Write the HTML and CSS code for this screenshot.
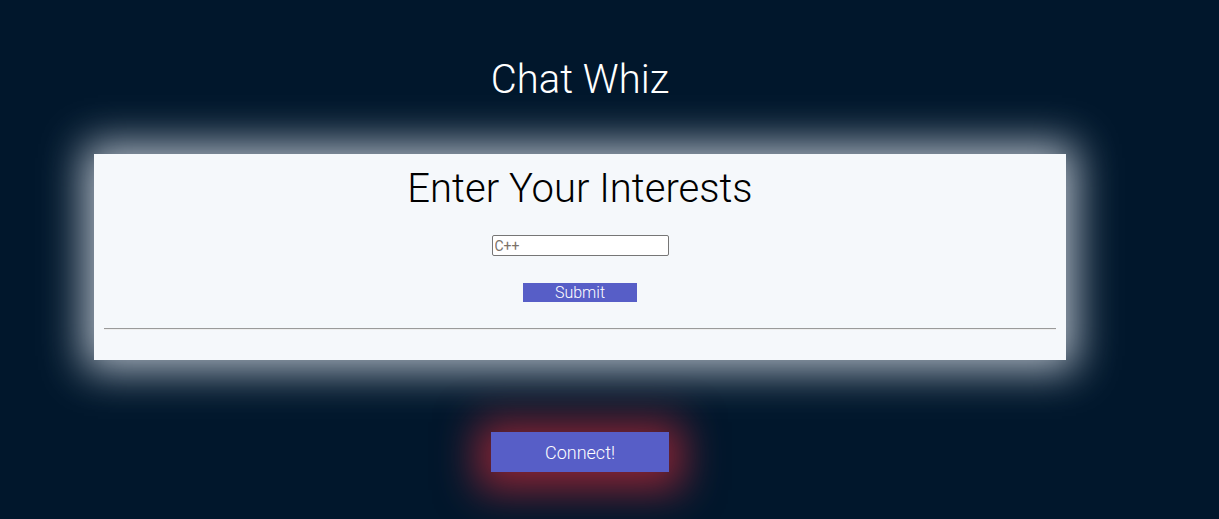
FILE: index.html
```html
<!DOCTYPE html>
<html lang="en">
<head>
<meta charset="utf-8">
<title>Chat Whiz</title>
<link rel="stylesheet" href="styles.css">
</head>
<body>
<div class="page">
  <h1 class="title">Chat Whiz</h1>
  <section class="card">
    <h2 class="card-title">Enter Your Interests</h2>
    <form class="interest-form">
      <input class="interest-input" type="text" placeholder="C++">
      <button class="submit-btn" type="button">Submit</button>
    </form>
    <hr class="divider">
  </section>
  <button class="connect-btn" type="button">Connect!</button>
</div>
</body>
</html>
```
FILE: styles.css
```css
html, body {
  margin: 0;
  padding: 0;
  background: #01172c;
  height: 100%;
}
body {
  font-family: Roboto, "Liberation Sans", sans-serif;
  font-weight: 300;
  overflow: hidden;
}
.page {
  width: 1160px;
  display: flex;
  flex-direction: column;
  align-items: center;
}
.title {
  margin: 56px 0 0;
  font-size: 40px;
  line-height: 48px;
  font-weight: 300;
  color: #ffffff;
}
.card {
  margin-top: 50px;
  width: 972px;
  box-sizing: border-box;
  padding: 10px 10px 30px;
  background: #f5f8fb;
  box-shadow: 0 0 40px 10px rgba(235, 240, 248, 0.75);
  display: flex;
  flex-direction: column;
  align-items: center;
}
.card-title {
  margin: 0;
  font-size: 40px;
  line-height: 50px;
  font-weight: 300;
  color: #000;
}
.interest-form {
  margin-top: 21px;
  display: flex;
  flex-direction: column;
  align-items: center;
  gap: 27px;
}
.interest-input {
  width: 177px;
  height: 21px;
  box-sizing: border-box;
  border: 1px solid #767676;
  border-radius: 2px;
  padding: 1px 2px;
  font-family: Roboto, "Liberation Sans", sans-serif;
  font-size: 14px;
  font-weight: 400;
  background: #fff;
}
.interest-input::placeholder {
  color: #7a7268;
}
.submit-btn {
  width: 114px;
  height: 19px;
  border: none;
  padding: 0;
  background: #575ec7;
  color: #fff;
  font-family: Roboto, "Liberation Sans", sans-serif;
  font-weight: 300;
  font-size: 16px;
  line-height: 19px;
}
.divider {
  align-self: stretch;
  margin: 26px 0 0;
  border: none;
  border-top: 1px solid #9a9a9a;
  border-bottom: 1px solid #eeeeee;
}
.connect-btn {
  margin-top: 72px;
  width: 178px;
  height: 40px;
  border: none;
  padding: 0;
  background: #575ec7;
  color: #fff;
  font-family: Roboto, "Liberation Sans", sans-serif;
  font-weight: 300;
  font-size: 18px;
  box-shadow: 0 4px 40px 14px rgba(175, 40, 55, 0.8);
}
```
